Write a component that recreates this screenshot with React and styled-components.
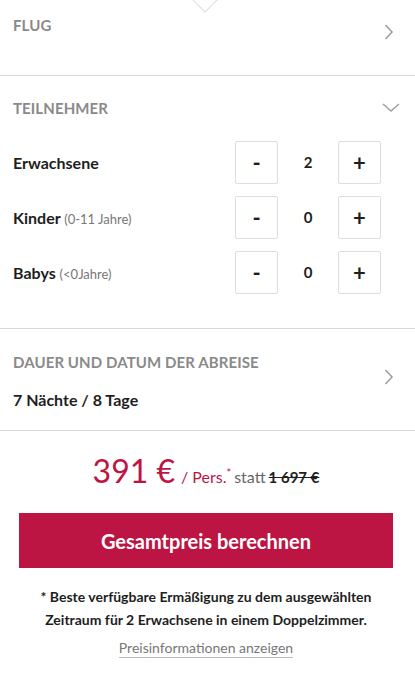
import React from "react";
import styled, { createGlobalStyle } from "styled-components";

const Global = createGlobalStyle`
  html, body { margin: 0; padding: 0; background: #fff; }
  body { font-family: Lato, "Noto Sans", sans-serif; color: #1e1e1e; }
  * { box-sizing: border-box; }
`;

const Page = styled.div`
  width: 415px;
  position: relative;
`;

const Pointer = styled.div`
  position: absolute;
  left: 196px;
  top: -9px;
  width: 18px;
  height: 18px;
  border-right: 1px solid #ddd;
  border-bottom: 1px solid #ddd;
  transform: rotate(45deg);
  background: #fff;
`;

const Section = styled.div`
  border-bottom: 1px solid #d9d9d9;
  padding: ${(p) => p.$pad || "16px 13px"};
`;

const Header = styled.div`
  display: flex;
  align-items: center;
  justify-content: space-between;
`;

const Title = styled.div`
  font-size: 15px;
  font-weight: 700;
  color: #8a8a8a;
  letter-spacing: 0.1px;
`;

const ChevronBox = styled.span`
  display: flex;
  margin-right: ${(p) => p.$right ?? 16}px;
  margin-top: ${(p) => p.$top ?? 0}px;
`;

const Chevron = ({ dir }) =>
  dir === "down" ? (
    <svg width="18" height="10" viewBox="0 0 18 10" fill="none" stroke="#a0a0a0" strokeWidth="1.6">
      <path d="M1 1 L9 8 L17 1" />
    </svg>
  ) : (
    <svg width="10" height="16" viewBox="0 0 10 16" fill="none" stroke="#a0a0a0" strokeWidth="1.6">
      <path d="M1.5 1 L8 8 L1.5 15" />
    </svg>
  );

const Rows = styled.div`
  display: flex;
  flex-direction: column;
  gap: 13px;
  margin-top: 24px;
`;

const Row = styled.div`
  display: flex;
  align-items: center;
  justify-content: space-between;
  height: 42px;
`;

const Label = styled.div`
  font-size: 16px;
  font-weight: 700;
  color: #1e1e1e;
`;

const Hint = styled.span`
  font-size: 13px;
  font-weight: 400;
  color: #777;
`;

const Counter = styled.div`
  display: flex;
  align-items: center;
  margin-right: 21px;
`;

const StepBtn = styled.button`
  width: 43px;
  height: 43px;
  border: 1px solid #dedede;
  border-radius: 2px;
  background: #fff;
  font-family: inherit;
  font-size: 22px;
  font-weight: 700;
  color: #1e1e1e;
  display: flex;
  align-items: center;
  justify-content: center;
  padding: 0;
  cursor: pointer;
`;

const Value = styled.div`
  width: 60px;
  text-align: center;
  font-size: 15px;
  font-weight: 700;
`;

const Duration = styled.div`
  font-size: 16px;
  font-weight: 700;
  margin-top: 19px;
`;

const PriceArea = styled.div`
  padding: 20px 22px 0 19px;
  display: flex;
  flex-direction: column;
  align-items: center;
`;

const PriceLine = styled.div`
  display: flex;
  align-items: baseline;
  gap: 6px;
  color: #bd1543;
`;

const Big = styled.span`
  font-size: 32px;
  font-weight: 400;
`;

const Per = styled.span`
  font-size: 16px;
  sup { font-size: 11px; }
`;

const Statt = styled.span`
  font-size: 16px;
  color: #666;
  margin-left: -3px;
`;

const Old = styled.span`
  font-size: 15px;
  font-weight: 700;
  color: #1e1e1e;
  text-decoration: line-through;
  margin-left: -3px;
`;

const CTA = styled.button`
  margin-top: 23px;
  width: 374px;
  height: 55px;
  border: none;
  background: #bd1543;
  color: #fff;
  font-family: inherit;
  font-size: 20px;
  font-weight: 700;
  cursor: pointer;
`;

const Note = styled.p`
  margin: 17px 0 0;
  text-align: center;
  font-size: 14px;
  font-weight: 700;
  line-height: 23px;
  color: #1e1e1e;
`;

const InfoLink = styled.a`
  margin-top: 8px;
  font-size: 14px;
  color: #777;
  text-decoration: none;
  border-bottom: 1px solid #bbb;
  line-height: 18px;
`;

function Stepper({ label, hint, value }) {
  return (
    <Row>
      <Label>
        {label} {hint && <Hint>{hint}</Hint>}
      </Label>
      <Counter>
        <StepBtn>-</StepBtn>
        <Value>{value}</Value>
        <StepBtn>+</StepBtn>
      </Counter>
    </Row>
  );
}

export default function App() {
  return (
    <Page>
      <Global />
      <Pointer />
      <Section $pad="10px 13px 35px">
        <Header>
          <Title>FLUG</Title>
          <ChevronBox $right={8} $top={14}>
            <Chevron />
          </ChevronBox>
        </Header>
      </Section>
      <Section $pad="23px 13px 35px">
        <Header>
          <Title>TEILNEHMER</Title>
          <ChevronBox $right={2}>
            <Chevron dir="down" />
          </ChevronBox>
        </Header>
        <Rows>
          <Stepper label="Erwachsene" value="2" />
          <Stepper label="Kinder" hint="(0-11 Jahre)" value="0" />
          <Stepper label="Babys" hint="(<0Jahre)" value="0" />
        </Rows>
      </Section>
      <Section $pad="24px 13px 21px">
        <Header>
          <div>
            <Title>DAUER UND DATUM DER ABREISE</Title>
            <Duration>7 Nächte / 8 Tage</Duration>
          </div>
          <ChevronBox $right={8} $top={-8}>
            <Chevron />
          </ChevronBox>
        </Header>
      </Section>
      <PriceArea>
        <PriceLine>
          <Big>391 €</Big>
          <Per>
            / Pers.<sup>*</sup>
          </Per>
          <Statt>statt</Statt>
          <Old>1 697 €</Old>
        </PriceLine>
        <CTA>Gesamtpreis berechnen</CTA>
        <Note>
          * Beste verfügbare Ermäßigung zu dem ausgewählten
          <br />
          Zeitraum für 2 Erwachsene in einem Doppelzimmer.
        </Note>
        <InfoLink href="#">Preisinformationen anzeigen</InfoLink>
      </PriceArea>
    </Page>
  );
}
